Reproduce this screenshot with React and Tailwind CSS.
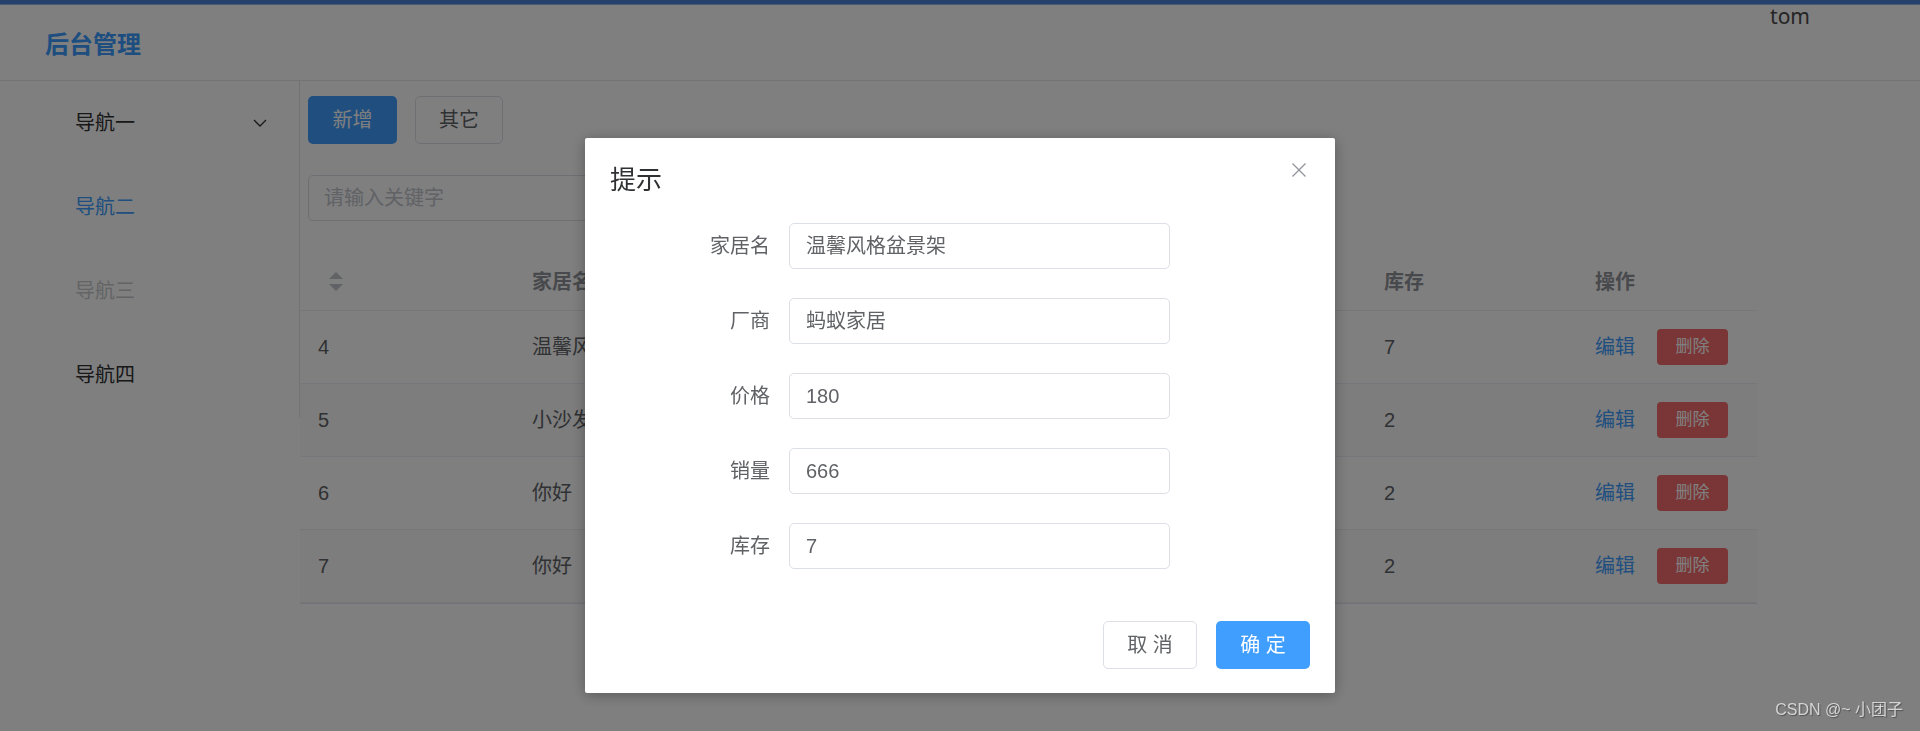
import React from 'react';

const font = "font-['Liberation_Sans','Noto_Sans_CJK_SC',sans-serif]";

const navItems = [
    { label: '导航一', tone: 'text-[#303133]', arrow: true },
    { label: '导航二', tone: 'text-[#409eff]' },
    { label: '导航三', tone: 'text-[#c8c9cc]' },
    { label: '导航四', tone: 'text-[#303133]' },
];

const rows = [
    { id: 4, name: '温馨风格盆景架', maker: '蚂蚁家居', price: 180, sales: 666, stock: 7 },
    { id: 5, name: '小沙发', maker: '顺平家居', price: 300, sales: 12, stock: 2 },
    { id: 6, name: '你好', maker: '你好', price: 10, sales: 2, stock: 2 },
    { id: 7, name: '你好', maker: '你好', price: 10, sales: 2, stock: 2 },
];

const fields = [
    { label: '家居名', value: '温馨风格盆景架' },
    { label: '厂商', value: '蚂蚁家居' },
    { label: '价格', value: '180' },
    { label: '销量', value: '666' },
    { label: '库存', value: '7' },
];

const cols = 'grid grid-cols-[214px_213px_213px_213px_213px_211px_180px]';

const SortCaret = () => (
    <svg width="14" height="19" viewBox="0 0 14 19" className="ml-[11px]">
        <polygon points="7,0 14,7 0,7" fill="#c0c4cc" />
        <polygon points="0,12 14,12 7,19" fill="#c0c4cc" />
    </svg>
);

const App = () => {
    return (
        <div className={`${font} min-h-screen bg-white`}>
            {/* top strip */}
            <div className="h-[4px] bg-[#4a80d4]" />
            <div className="h-[1px] bg-[#90b2e0]" />

            {/* header */}
            <header className="flex h-[76px] items-center border-b border-[#e6e6e6] pl-[45px] pr-[110px]">
                <h1 className="mt-[5px] text-[24px] font-bold leading-[32px] text-[#3a9cff]">后台管理</h1>
                <span className="ml-auto mt-[1px] self-start font-['Noto_Sans',sans-serif] text-[21px] leading-[20px] text-[#4a4a4a]">
                    tom
                </span>
            </header>

            <div className="flex items-start">
                {/* sidebar */}
                <aside className="w-[300px] shrink-0 border-r border-[#e6e6e6]">
                    {navItems.map((item) => (
                        <div
                            key={item.label}
                            className={`flex h-[84px] items-center justify-between pl-[75px] pr-[32px] text-[20px] ${item.tone}`}
                        >
                            <span>{item.label}</span>
                            {item.arrow && (
                                <svg width="14" height="8" viewBox="0 0 14 8">
                                    <polyline points="1,1 7,7 13,1" fill="none" stroke="#303133" strokeWidth="1.3" />
                                </svg>
                            )}
                        </div>
                    ))}
                </aside>

                {/* main */}
                <main className="flex-1">
                    <div className="pl-[8px] pt-[15px]">
                        <div className="flex gap-[18px]">
                            <button className="h-[48px] w-[89px] rounded-[5px] bg-[#409eff] text-[20px] text-white">新增</button>
                            <button className="h-[48px] w-[88px] rounded-[5px] border border-[#dcdfe6] bg-white text-[20px] text-[#606266]">
                                其它
                            </button>
                        </div>
                        <div className="mt-[31px] flex h-[46px] w-[520px] items-center rounded-[5px] border border-[#dcdfe6] pl-[15px] text-[20px] text-[#c0c4cc]">
                            请输入关键字
                        </div>
                    </div>

                    <div className="mt-[32px] w-[1457px] border-b border-[#e4e7ed]">
                        <div className={`${cols} h-[58px] border-b border-[#ebeef5] text-[20px] font-bold text-[#909399]`}>
                            <div className="flex items-center pl-[18px]">
                                <SortCaret />
                            </div>
                            {['家居名', '厂商', '价格', '销量', '库存', '操作'].map((h) => (
                                <div key={h} className="flex items-center pl-[18px]">{h}</div>
                            ))}
                        </div>
                        {rows.map((r, i) => (
                            <div
                                key={r.id}
                                className={`${cols} h-[73px] border-b border-[#ebeef5] text-[20px] text-[#606266] ${i % 2 === 1 ? 'bg-[#fafafa]' : 'bg-white'}`}
                            >
                                <div className="flex items-center pl-[18px]">{r.id}</div>
                                <div className="flex items-center pl-[18px]">{r.name}</div>
                                <div className="flex items-center pl-[18px]">{r.maker}</div>
                                <div className="flex items-center pl-[18px]">{r.price}</div>
                                <div className="flex items-center pl-[18px]">{r.sales}</div>
                                <div className="flex items-center pl-[18px]">{r.stock}</div>
                                <div className="flex items-center gap-[22px] pl-[18px]">
                                    <span className="text-[#409eff]">编辑</span>
                                    <button className="h-[36px] w-[71px] rounded-[4px] bg-[#f56c6c] text-[17px] text-white">删除</button>
                                </div>
                            </div>
                        ))}
                    </div>
                </main>
            </div>

            {/* modal mask */}
            <div className="fixed inset-0 bg-black/50" />

            {/* dialog */}
            <div className="fixed inset-0 flex justify-center">
                <div className="mt-[138px] h-fit w-[750px] rounded-[2px] bg-white shadow-[0_2px_14px_rgba(0,0,0,0.3)]">
                    <div className="flex items-start justify-between pl-[25px] pr-[28px] pt-[26px]">
                        <span className="text-[26px] leading-[32px] text-[#303133]">提示</span>
                        <svg width="16" height="14" viewBox="0 0 16 14" className="mt-[-1px]">
                            <line x1="1.5" y1="0.5" x2="14.5" y2="13.5" stroke="#909399" strokeWidth="1.3" />
                            <line x1="14.5" y1="0.5" x2="1.5" y2="13.5" stroke="#909399" strokeWidth="1.3" />
                        </svg>
                    </div>

                    <div className="mt-[27px] flex flex-col gap-[29px]">
                        {fields.map((f) => (
                            <div key={f.label} className="flex items-center">
                                <label className="w-[204px] pr-[19px] text-right text-[20px] text-[#606266]">{f.label}</label>
                                <div className="flex h-[46px] w-[381px] items-center rounded-[5px] border border-[#dcdfe6] pl-[16px] text-[20px] text-[#606266]">
                                    {f.value}
                                </div>
                            </div>
                        ))}
                    </div>

                    <div className="mt-[52px] flex justify-end gap-[19px] pb-[24px] pr-[25px]">
                        <button className="h-[48px] w-[94px] rounded-[5px] border border-[#dcdfe6] bg-white text-[20px] text-[#606266]">
                            取 消
                        </button>
                        <button className="h-[48px] w-[94px] rounded-[5px] bg-[#409eff] text-[20px] text-white">确 定</button>
                    </div>
                </div>
            </div>

            {/* screenshot watermark */}
            <div className="fixed bottom-[9px] right-[17px] text-[16px] text-[#d4d4d4] [text-shadow:1px_1px_1px_rgba(0,0,0,0.35)]">
                CSDN @~ 小团子
            </div>
        </div>
    );
};

export default App;
